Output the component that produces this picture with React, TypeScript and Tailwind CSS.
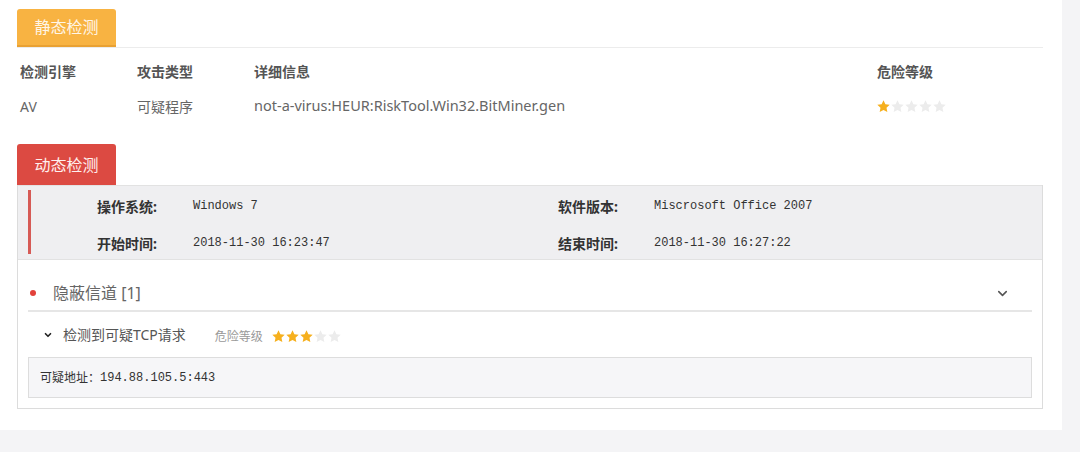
import React from "react";
import { ChevronDown } from "lucide-react";

const sans = "font-['Noto_Sans','Noto_Sans_CJK_SC',sans-serif]";
const mono = "font-['Liberation_Mono','Noto_Sans_CJK_SC',monospace]";

// five-star rating, filled count in gold
const Stars: React.FC<{ filled: number; size: number }> = ({ filled, size }) => (
  <div className="flex items-center gap-px">
    {[0, 1, 2, 3, 4].map((i) => (
      <svg key={i} width={size} height={size} viewBox="2 2 20 20">
        <path
          d="M12 2.5l2.9 6.1 6.6.8-4.9 4.6 1.3 6.6L12 17.3l-5.9 3.3 1.3-6.6-4.9-4.6 6.6-.8z"
          fill={i < filled ? "#f6b01e" : "#ececec"}
        />
      </svg>
    ))}
  </div>
);

const InfoRow: React.FC<{ items: [string, string][] }> = ({ items }) => (
  <div className="flex h-[20px] items-center">
    {items.map(([label, value]) => (
      <div key={label} className="flex w-[461px] items-center">
        <span className={`w-[96px] text-[14px] font-bold text-[#333] ${sans}`}>{label}</span>
        <span className={`text-[12px] text-[#333] ${mono}`}>{value}</span>
      </div>
    ))}
  </div>
);

export default function App() {
  return (
    <div className={`h-[452px] w-full bg-[#f4f4f6] ${sans}`}>
      <div className="h-[430px] w-[1062px] bg-white pl-[17px] pr-[19px] pt-[9px]">
        {/* static detection */}
        <div className="flex border-b border-[#ececec]">
          <div className="flex h-[38px] w-[99px] items-center justify-center rounded-t-[3px] border-b-2 border-[#e9a132] bg-[#f8b342] text-[16px] text-[#fff6e8]">
            静态检测
          </div>
        </div>
        <div className="flex h-[46px] items-center text-[14px] font-semibold text-[#555]">
          <span className="w-[120px] pl-[3px]">检测引擎</span>
          <span className="w-[117px]">攻击类型</span>
          <span className="w-[623px]">详细信息</span>
          <span>危险等级</span>
        </div>
        <div className="flex h-[24px] items-center text-[14px] text-[#666]">
          <span className="w-[120px] pl-[3px]">AV</span>
          <span className="w-[117px]">可疑程序</span>
          <span className="w-[623px] text-[14.5px]">not-a-virus:HEUR:RiskTool.Win32.BitMiner.gen</span>
          <Stars filled={1} size={13} />
        </div>

        {/* dynamic detection */}
        <div className="mt-[26px] flex h-[41px] w-[99px] items-center justify-center rounded-t-[3px] bg-[#dc4a42] text-[16px] text-[#fff0ee]">
          动态检测
        </div>
        <div className="border border-t-0 border-[#dcdcdc] pb-[10px]">
          <div className="border-b border-t border-[#e2e2e2] bg-[#efeff1] px-[10px] pb-[5px] pt-[4px]">
            <div className="flex flex-col gap-[17px] border-l-[3px] border-[#d65a55] pb-[1px] pl-[66px] pt-[6px]">
              <InfoRow items={[["操作系统:", "Windows 7"], ["软件版本:", "Miscrosoft Office 2007"]]} />
              <InfoRow items={[["开始时间:", "2018-11-30 16:23:47"], ["结束时间:", "2018-11-30 16:27:22"]]} />
            </div>
          </div>

          <div className="px-[10px]">
            <div className="mt-[16px] flex h-[36px] items-center border-b-2 border-[#e6e6e6] pr-[22px]">
              <span className="ml-[2px] h-[6px] w-[6px] rounded-full bg-[#e2413b]" />
              <span className="ml-[17px] text-[16px] text-[#666]">隐蔽信道 [1]</span>
              <ChevronDown className="ml-auto text-[#555]" size={15} strokeWidth={2.5} />
            </div>
            <div className="flex h-[45px] items-center">
              <ChevronDown className="ml-[15px] text-[#222]" size={10} strokeWidth={4} />
              <span className="ml-[10px] text-[14px] text-[#555]">检测到可疑TCP请求</span>
              <span className="ml-[29px] mt-[4px] text-[12px] text-[#999]">危险等级</span>
              <div className="ml-[9px] mt-[3px]">
                <Stars filled={3} size={13} />
              </div>
            </div>
            <div className="flex h-[41px] items-center border border-[#dddddd] bg-[#f6f6f8] pl-[11px] text-[12px] text-[#333]">
              <span className={sans}>可疑地址：</span>
              <span className={mono}>194.88.105.5:443</span>
            </div>
          </div>
        </div>
      </div>
    </div>
  );
}
